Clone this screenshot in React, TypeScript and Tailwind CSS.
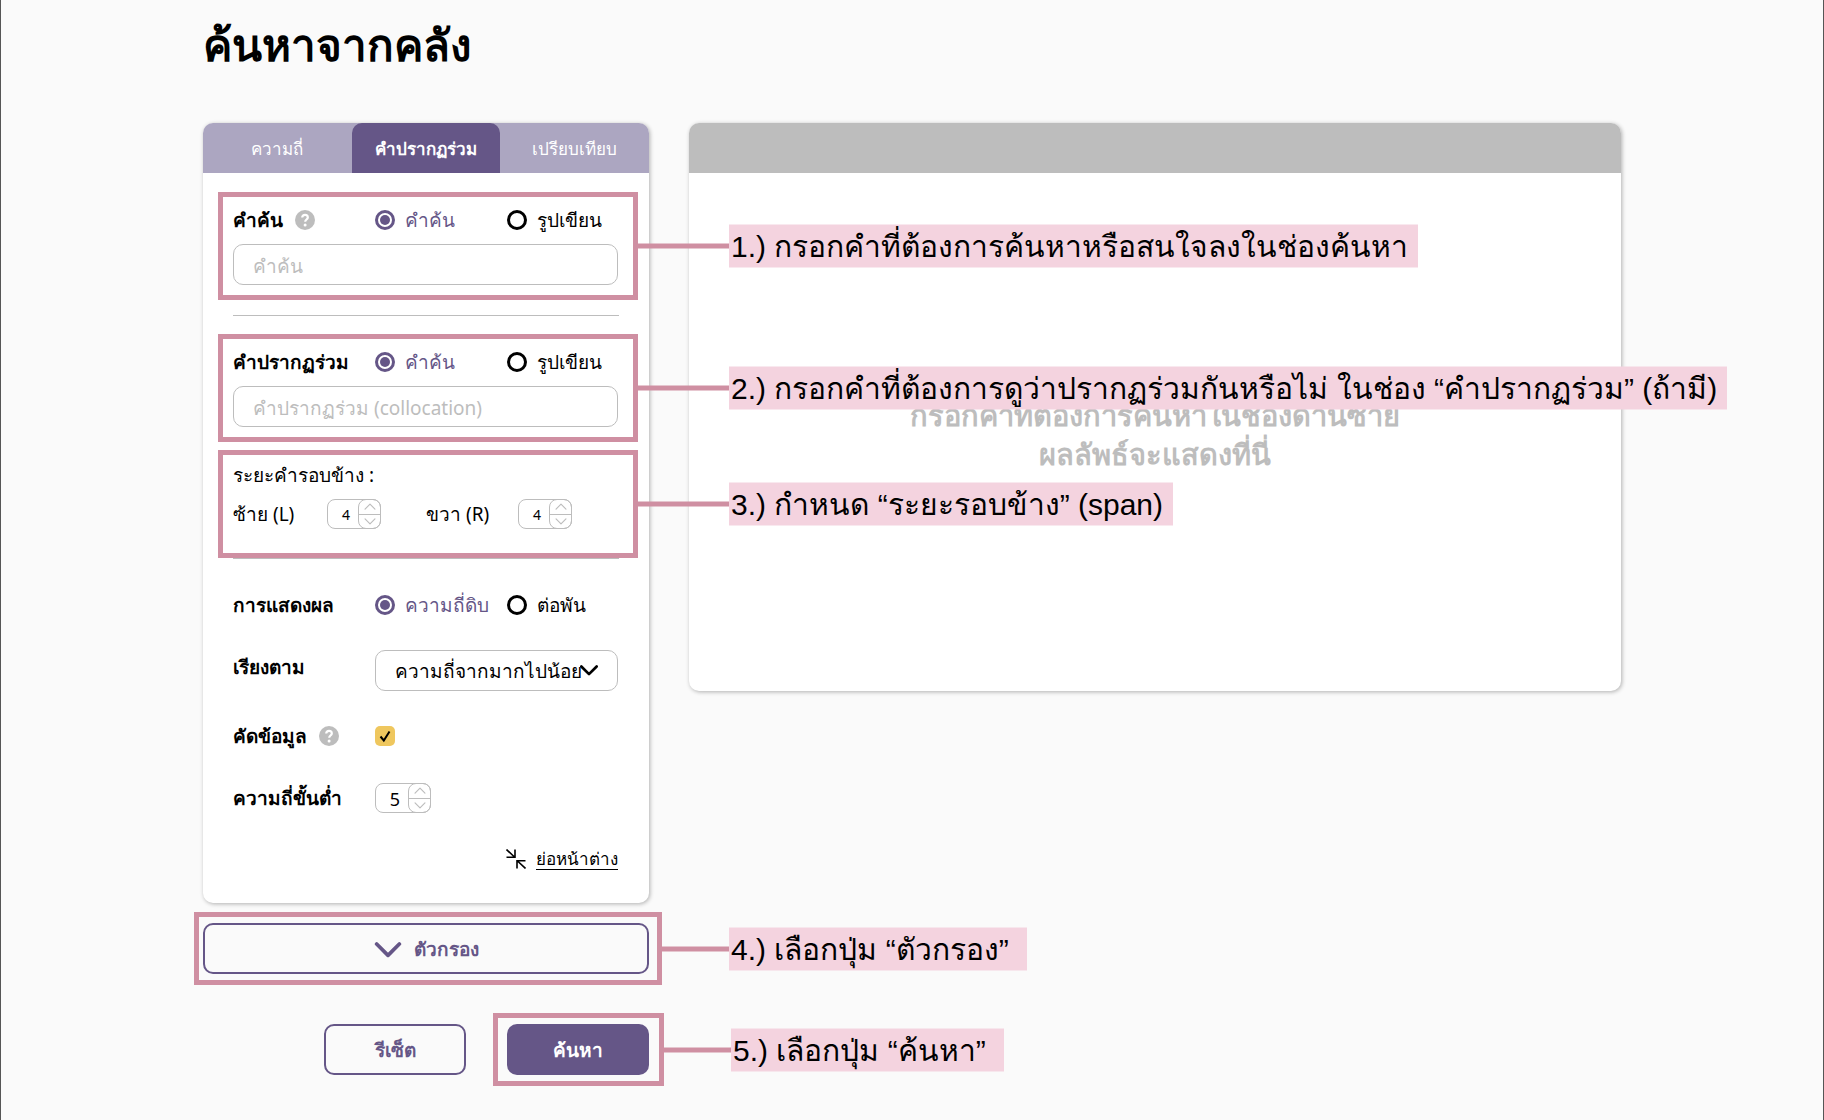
import { useState } from 'react';
import type { ReactNode } from 'react';

const TABS = ['ความถี่', 'คำปรากฏร่วม', 'เปรียบเทียบ'];

function Chevron({ className, stroke = 2, up }: { className: string; stroke?: number; up?: boolean }) {
  return (
    <svg viewBox="0 0 20 12" className={className} fill="none" stroke="currentColor" strokeWidth={stroke} aria-hidden="true">
      <path d={up ? 'M1.5 10.5 10 2l8.5 8.5' : 'M1.5 1.5 10 10l8.5-8.5'} strokeLinecap="round" strokeLinejoin="round" />
    </svg>
  );
}

function HelpIcon() {
  return (
    <svg viewBox="0 0 20 20" className="size-5 shrink-0" aria-hidden="true">
      <circle cx="10" cy="10" r="10" fill="#bdbdbd" />
      <path
        d="M7.2 7.6C7.2 5.9 8.4 4.9 10 4.9s2.8 1 2.8 2.5c0 2-2.6 2.2-2.6 4.3"
        fill="none"
        stroke="white"
        strokeWidth="2.2"
      />
      <circle cx="10.1" cy="14.9" r="1.5" fill="white" />
    </svg>
  );
}

// Line from the right edge of a highlighted group to its numbered note
function Callout({ children, short }: { children: ReactNode; short?: boolean }) {
  return (
    <div className="absolute left-full top-1/2 z-10 flex -translate-y-1/2 items-center">
      <span className={`h-[5px] shrink-0 bg-[#cf8fa2] ${short ? 'w-[72px]' : 'w-24'}`} />
      <span className="h-[43px] whitespace-pre bg-[#f4d3df] pr-[10px] pl-[2px] font-['Liberation_Sans',sans-serif] text-[30px] leading-[43px] text-black">
        {children}
      </span>
    </div>
  );
}

interface RadioPairProps {
  name: string;
  options: [string, string];
}

function RadioPair({ name, options }: RadioPairProps) {
  const [value, setValue] = useState(options[0]);
  return (
    <div className="flex items-center">
      {options.map((option) => (
        <label
          key={option}
          className={`flex items-center gap-[10px] whitespace-nowrap text-[19px] leading-[22px] first:w-[132px] ${
            option === value ? 'text-[#655687]' : 'text-black'
          }`}
        >
          <input
            type="radio"
            name={name}
            checked={option === value}
            onChange={() => setValue(option)}
            className="grid size-5 shrink-0 appearance-none place-content-center rounded-full border-[3px] border-black before:size-[10px] before:rounded-full checked:border-[#655687] checked:before:bg-[#655687]"
          />
          {option}
        </label>
      ))}
    </div>
  );
}

interface StepperProps {
  id: string;
  initial: number;
  large?: boolean;
}

function Stepper({ id, initial, large }: StepperProps) {
  const [value, setValue] = useState(initial);
  return (
    <div className={`flex h-[30px] rounded-lg border border-[#bdbdbd] bg-white ${large ? 'w-14' : 'w-[54px]'}`}>
      <input
        id={id}
        inputMode="numeric"
        value={value}
        onChange={(e) => setValue(Number(e.target.value) || 0)}
        className={`w-0 flex-1 bg-transparent pt-[2px] pl-[6px] text-center outline-none ${large ? 'text-[18px]' : 'text-[14px]'}`}
      />
      <div className="-my-px -mr-px flex w-[23px] flex-col divide-y divide-[#bdbdbd] rounded-lg border border-[#bdbdbd] text-[#bdbdbd]">
        <button type="button" aria-label="เพิ่ม" onClick={() => setValue(value + 1)} className="flex flex-1 items-center justify-center">
          <Chevron up className="h-[7px] w-3" />
        </button>
        <button type="button" aria-label="ลด" onClick={() => setValue(value - 1)} className="flex flex-1 items-center justify-center">
          <Chevron className="h-[7px] w-3" />
        </button>
      </div>
    </div>
  );
}

const highlight = 'relative border-[5px] border-[#cf8fa2]';
const textField =
  'h-[41px] w-full rounded-[10px] border border-[#bdbdbd] bg-white pt-[2px] pl-[19px] text-[19px] placeholder:text-[#bdbdbd] outline-none';
const rowLabel = 'flex w-[142px] shrink-0 items-center gap-3 whitespace-nowrap text-[19px] leading-[22px] font-bold';

export default function App() {
  const [tab, setTab] = useState(TABS[1]);
  const [filtered, setFiltered] = useState(true);

  return (
    <main className="min-h-screen overflow-x-hidden border-x border-[#555] bg-[#fafafa] px-[202px] pb-8 font-['Noto_Sans',sans-serif] text-black">
      <h1 className="pt-3 text-[44px] leading-[64px] font-bold">ค้นหาจากคลัง</h1>

      <div className="mt-[47px] flex items-start gap-10">
        <form className="w-[446px] shrink-0" onSubmit={(e) => e.preventDefault()}>
          <section className="rounded-[10px] bg-white pb-8 shadow-[1px_1px_4px_rgba(0,0,0,0.3)]">
            <div className="flex h-[50px] rounded-t-[10px] bg-[#aca6c1]" role="tablist">
              {TABS.map((t) => (
                <button
                  key={t}
                  type="button"
                  role="tab"
                  aria-selected={t === tab}
                  onClick={() => setTab(t)}
                  className={`flex-1 basis-0 rounded-t-[10px] pt-[2px] text-[17px] text-white ${t === tab ? 'bg-[#655687] font-bold' : ''}`}
                >
                  {t}
                </button>
              ))}
            </div>

            <div className="pt-[19px] pr-[11px] pl-[15px]">
              <div className={`${highlight} pt-3 pr-[15px] pb-[10px] pl-[10px]`}>
                <div className="mb-[13px] flex h-[22px] items-center">
                  <label htmlFor="keyword" className={rowLabel}>
                    คำค้น
                    <HelpIcon />
                  </label>
                  <RadioPair name="keyword-type" options={['คำค้น', 'รูปเขียน']} />
                </div>
                <input id="keyword" placeholder="คำค้น" className={textField} />
                <Callout>1.) กรอกคำที่ต้องการค้นหาหรือสนใจลงในช่องค้นหา</Callout>
              </div>

              <hr className="mt-[15px] mr-[19px] mb-[18px] ml-[15px] border-[#bdbdbd]" />

              <div className={`${highlight} pt-3 pr-[15px] pb-[10px] pl-[10px]`}>
                <div className="mb-[13px] flex h-[22px] items-center">
                  <label htmlFor="collocation" className={rowLabel}>
                    คำปรากฏร่วม
                  </label>
                  <RadioPair name="collocation-type" options={['คำค้น', 'รูปเขียน']} />
                </div>
                <input id="collocation" placeholder="คำปรากฏร่วม (collocation)" className={textField} />
                <Callout>2.) กรอกคำที่ต้องการดูว่าปรากฏร่วมกันหรือไม่ ในช่อง “คำปรากฏร่วม” (ถ้ามี)</Callout>
              </div>

              <div className={`${highlight} mt-2 pt-2 pr-[15px] pb-6 pl-[10px]`}>
                <p className="mb-3 text-[19px] leading-6">ระยะคำรอบข้าง :</p>
                <div className="flex items-center text-[19px] leading-6">
                  <label htmlFor="span-left" className="w-[94px]">
                    ซ้าย (L)
                  </label>
                  <Stepper id="span-left" initial={4} />
                  <label htmlFor="span-right" className="ml-[45px] w-[92px]">
                    ขวา (R)
                  </label>
                  <Stepper id="span-right" initial={4} />
                </div>
                <Callout>3.) กำหนด “ระยะรอบข้าง” (span)</Callout>
              </div>

              <hr className="mr-[19px] ml-[15px] border-[#bdbdbd]" />

              <div className="mt-[35px] flex flex-col pr-5 pl-[15px]">
                <div className="flex h-[22px] items-center">
                  <span className={rowLabel}>การแสดงผล</span>
                  <RadioPair name="display" options={['ความถี่ดิบ', 'ต่อพัน']} />
                </div>

                <div className="mt-[34px] flex items-start">
                  <label htmlFor="sort" className={`${rowLabel} pt-[6px]`}>
                    เรียงตาม
                  </label>
                  <div className="relative flex-1">
                    <select
                      id="sort"
                      className="h-[41px] w-full appearance-none rounded-[10px] border border-[#bdbdbd] bg-white pt-[2px] pl-[19px] text-[19px]"
                    >
                      <option>ความถี่จากมากไปน้อย</option>
                      <option>ความถี่จากน้อยไปมาก</option>
                    </select>
                    <Chevron stroke={3} className="pointer-events-none absolute top-[15px] right-5 h-[11px] w-[18px]" />
                  </div>
                </div>

                <div className="mt-[34px] flex items-center">
                  <label htmlFor="filtered" className={rowLabel}>
                    คัดข้อมูล
                    <HelpIcon />
                  </label>
                  <div className="relative size-5">
                    <input
                      id="filtered"
                      type="checkbox"
                      checked={filtered}
                      onChange={(e) => setFiltered(e.target.checked)}
                      className="block size-5 appearance-none rounded-[5px] bg-[#efc75e]"
                    />
                    {filtered && (
                      <svg viewBox="0 0 20 20" className="pointer-events-none absolute inset-0" fill="none" aria-hidden="true">
                        <path d="M5.5 10.5 8.8 14.5 14.5 5.5" stroke="black" strokeWidth="2" />
                      </svg>
                    )}
                  </div>
                </div>

                <div className="mt-9 flex items-center">
                  <label htmlFor="min-frequency" className={rowLabel}>
                    ความถี่ขั้นต่ำ
                  </label>
                  <Stepper id="min-frequency" initial={5} large />
                </div>

                <a href="#collapse" className="mt-[34px] flex items-center gap-[10px] self-end text-[17px] leading-6">
                  <svg viewBox="0 0 20 20" className="size-5" fill="none" stroke="currentColor" strokeWidth="1.6" aria-hidden="true">
                    <path d="M.5.5 8.5 8M9 .5V8.2H.5M19.5 19.5 11.5 12M11 19.5V11.8H19.5" />
                  </svg>
                  <span className="underline underline-offset-4">ย่อหน้าต่าง</span>
                </a>
              </div>
            </div>
          </section>

          <div className={`${highlight} mt-[9px] -mr-[13px] -ml-[9px] py-[6px] pr-2 pl-1`}>
            <button
              type="button"
              className="flex h-[51px] w-full items-center justify-center gap-3 rounded-[10px] border-2 border-[#655687] pt-[2px] text-[19px] font-bold text-[#655687]"
            >
              <Chevron className="h-4 w-7" stroke={2.8} />
              ตัวกรอง
            </button>
            <Callout short>4.) เลือกปุ่ม “ตัวกรอง” </Callout>
          </div>

          <div className="-mr-[15px] mt-7 flex items-center justify-end gap-[27px]">
            <button
              type="reset"
              className="h-[51px] w-[142px] rounded-[10px] border-2 border-[#655687] pt-[2px] text-[19px] font-bold text-[#655687]"
            >
              รีเซ็ต
            </button>
            <div className={`${highlight} py-[6px] pr-[10px] pl-[9px]`}>
              <button
                type="submit"
                className="block h-[51px] w-[142px] rounded-[10px] bg-[#655687] pt-[2px] text-[19px] font-bold text-white"
              >
                ค้นหา
              </button>
              <Callout short>5.) เลือกปุ่ม “ค้นหา” </Callout>
            </div>
          </div>
        </form>

        <section className="flex min-h-[568px] min-w-0 flex-1 flex-col rounded-[10px] bg-white shadow-[1px_1px_4px_rgba(0,0,0,0.3)]">
          <div className="h-[50px] rounded-t-[10px] bg-[#bdbdbd]" />
          <p className="flex flex-1 flex-col items-center justify-center pt-1 text-center text-[29px] leading-[39px] font-bold text-[#bdbdbd]">
            <span>กรอกคำที่ต้องการค้นหาในช่องด้านซ้าย</span>
            <span>ผลลัพธ์จะแสดงที่นี่</span>
          </p>
        </section>
      </div>
    </main>
  );
}
